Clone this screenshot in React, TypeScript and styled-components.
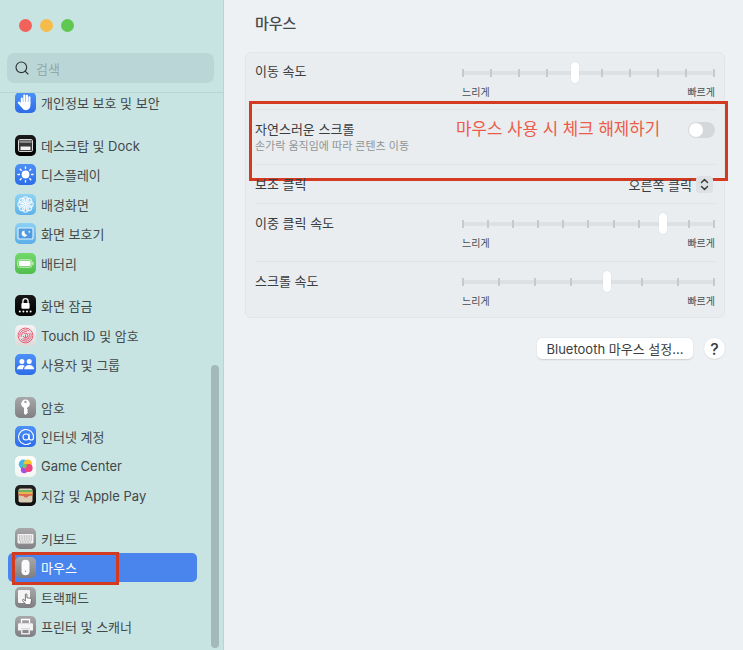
import React from 'react';
import styled, {createGlobalStyle} from 'styled-components';
import {AtSign, Search} from 'lucide-react';

const FONT = `Inter, "Noto Sans CJK KR", sans-serif`;

const GlobalStyle = createGlobalStyle`
  html, body {
    margin: 0;
    padding: 0;
    height: 100%;
    overflow: hidden;
    background: #EDF1F4;
  }
  body {
    font-family: ${FONT};
    -webkit-font-smoothing: antialiased;
  }
`;

const Window = styled.div`
  display: flex;
  width: 743px;
  height: 650px;
  overflow: hidden;
`;

/* sidebar */
const Sidebar = styled.aside`
  position: relative;
  flex: 0 0 223px;
  height: 650px;
  background: #C8E4E2;
  border-right: 1px solid #BAD4D3;
  display: flex;
  flex-direction: column;
`;
const Header = styled.div`
  flex: 0 0 93px;
  padding: 19px 9px 0 7px;
  box-sizing: border-box;
  border-bottom: 1px solid #B9D6D5;
`;
const Lights = styled.div`
  display: flex;
  gap: 8px;
  padding-left: 12px;
  margin-bottom: 21px;
`;
const Light = styled.span<{color: string}>`
  width: 13px;
  height: 13px;
  border-radius: 50%;
  background: ${props => props.color};
`;
const SearchBox = styled.div`
  height: 30px;
  border-radius: 7px;
  background: #BBD6D6;
  display: flex;
  align-items: center;
  gap: 6px;
  padding-left: 7px;
  color: #2F3436;
  font-size: 13px;
`;
const SearchHint = styled.span`
  color: #94A8A9;
`;
const ListClip = styled.div`
  flex: 1;
  overflow: hidden;
`;
const List = styled.div`
  margin-top: -5px;
  display: flex;
  flex-direction: column;
  gap: 13.4px;
`;
const Group = styled.div`
  display: flex;
  flex-direction: column;
`;
const Item = styled.div<{$active?: boolean}>`
  position: relative;
  height: 29.4px;
  margin: 0 26px 0 8px;
  padding-left: 7px;
  border-radius: 5px;
  display: flex;
  align-items: center;
  gap: 5px;
  font-size: 13px;
  color: ${props => props.$active ? '#FFFFFF' : '#43484A'};
  background: ${props => props.$active ? '#4A85EE' : 'transparent'};
`;
const Tile = styled.span<{$from: string; $to: string}>`
  flex: 0 0 21px;
  width: 21px;
  height: 21px;
  border-radius: 5px;
  background: linear-gradient(${props => props.$from}, ${props => props.$to});
  display: flex;
  align-items: center;
  justify-content: center;
  overflow: hidden;
  svg {
    display: block;
  }
`;
const Scrollbar = styled.div`
  position: absolute;
  left: 211px;
  top: 365px;
  width: 8px;
  height: 283px;
  border-radius: 4px;
  background: #A3B9BA;
`;
const Mark = styled.div`
  position: absolute;
  box-sizing: border-box;
  border: 3px solid #D33A20;
  pointer-events: none;
`;
const SidebarMark = styled(Mark)`
  left: 4px;
  top: -1px;
  width: 107px;
  height: 33px;
`;

/* main pane */
const Main = styled.main`
  flex: 1;
  padding: 0 18px 0 21px;
  color: #3A3D40;
`;
const Title = styled.h1`
  margin: 0;
  height: 52px;
  padding: 13px 0 0 10px;
  box-sizing: border-box;
  font-size: 15px;
  line-height: 22px;
  font-weight: 500;
  color: #46494C;
`;
const Card = styled.section`
  box-sizing: border-box;
  height: 266px;
  padding: 0 9px;
  background: #E9EDF0;
  border: 1px solid #E2E6E9;
  border-radius: 6px;
`;
const Row = styled.div<{$height: number}>`
  position: relative;
  box-sizing: border-box;
  height: ${props => props.$height}px;
  display: flex;
  justify-content: space-between;
  & + & {
    border-top: 1px solid #DFE3E6;
  }
`;
const Label = styled.div`
  font-size: 13px;
  line-height: 18px;
`;
const SliderLabel = styled(Label)`
  margin-top: 10px;
  ${Row}:first-child > & {
    margin-top: 9px;
  }
`;
const SliderBox = styled.div`
  width: 253px;
  padding-top: 9px;
`;
const Track = styled.div`
  position: relative;
  height: 21px;
  display: flex;
  align-items: center;
  justify-content: space-between;
  &::before {
    content: '';
    position: absolute;
    left: 0;
    right: 0;
    top: 8.5px;
    height: 4px;
    background: #DDE1E4;
  }
`;
const Tick = styled.span`
  position: relative;
  width: 2px;
  height: 8px;
  background: #C6CACD;
`;
const Thumb = styled.span`
  position: absolute;
  top: 0;
  width: 8px;
  height: 21px;
  margin-left: -4px;
  border-radius: 4px;
  background: #FFFFFF;
  box-shadow: 0 0 1px rgba(0, 0, 0, 0.2);
`;
const Captions = styled.div`
  display: flex;
  justify-content: space-between;
  margin-top: 3px;
  font-size: 10px;
  line-height: 12px;
  color: #4A4D50;
`;
const ToggleCopy = styled.div`
  padding-top: 10px;
`;
const Sub = styled.div`
  font-size: 11px;
  line-height: 16px;
  color: #909497;
`;
const Toggle = styled.span`
  align-self: flex-start;
  margin-top: 12px;
  width: 27px;
  height: 16px;
  border-radius: 8px;
  background: #D5D8DB;
  display: flex;
  align-items: center;
  padding-left: 1px;
  box-sizing: border-box;
`;
const Knob = styled.span`
  width: 14px;
  height: 14px;
  border-radius: 50%;
  background: #FFFFFF;
`;
const RowMark = styled(Mark)`
  left: -6px;
  right: -13px;
  top: -9px;
  bottom: -17px;
`;
const Annotation = styled.div`
  position: absolute;
  left: 201px;
  top: 7px;
  font-size: 16.8px;
  line-height: 24px;
  color: #EE5A48;
`;
const PlainRow = styled(Row)`
  align-items: center;
`;
const Picker = styled.div`
  display: flex;
  align-items: center;
  gap: 4px;
  padding-right: 2px;
  font-size: 13px;
`;
const Stepper = styled.span`
  width: 17px;
  height: 17px;
  border-radius: 4px;
  background: #DDE1E4;
  display: flex;
  align-items: center;
  justify-content: center;
`;
const Footer = styled.div`
  display: flex;
  justify-content: flex-end;
  align-items: center;
  gap: 11px;
  margin-top: 20px;
`;
const Button = styled.button`
  height: 21px;
  width: 156px;
  padding: 0;
  border: 0;
  border-radius: 5px;
  background: #FFFFFF;
  box-shadow: 0 0.5px 1.5px rgba(0, 0, 0, 0.14);
  font-family: ${FONT};
  font-size: 13px;
  color: #3A3D40;
`;
const Help = styled(Button)`
  width: 21px;
  border-radius: 50%;
  font-weight: 500;
  font-size: 16px;
`;

const Glyph = ({children}: {children: React.ReactNode}) => (
    <svg width="21" height="21" viewBox="0 0 21 21">{children}</svg>
);

const HandIcon = () => (
    <Tile $from="#4E93F7" $to="#2B6CE8">
        <Glyph>
            <g stroke="#FFF" strokeWidth="2.1" strokeLinecap="round" fill="none">
                <path d="M6.8 6.5V11M9.3 3.6V10.5M11.9 3.8V10.5M14.4 5.2V11" />
                <path d="M3.9 10.5L6.8 14" />
            </g>
            <path d="M6 10h9.4v3.6c0 2.7-1.9 4.6-4.4 4.6-2.1 0-3.2-.9-4.2-2.6L5 12.5z" fill="#FFF" />
        </Glyph>
    </Tile>
);
const DockIcon = () => (
    <Tile $from="#1B1B1B" $to="#000">
        <Glyph>
            <rect x="3.5" y="4.5" width="14" height="12" rx="1.2" fill="#3A3A3A" stroke="#D8D8D8" />
            <rect x="4.5" y="5.5" width="12" height="2.4" fill="#8E8E8E" />
            <rect x="5.5" y="11.5" width="10" height="3.5" rx=".6" fill="#F2F2F2" />
        </Glyph>
    </Tile>
);
const SunIcon = () => (
    <Tile $from="#4C90F6" $to="#2C6DE9">
        <Glyph>
            <circle cx="10.5" cy="10.5" r="3.9" fill="#FFF" />
            <g stroke="#FFF" strokeWidth="1.4" strokeLinecap="round">
                <path d="M10.5 3v1.4M10.5 16.6V18M3 10.5h1.4M16.6 10.5H18M5.2 5.2l1 1M14.8 14.8l1 1M15.8 5.2l-1 1M6.2 14.8l-1 1" />
            </g>
        </Glyph>
    </Tile>
);
const FlowerIcon = () => (
    <Tile $from="#8FD2F5" $to="#5DB2EA">
        <Glyph>
            <g fill="rgba(255,255,255,.28)" stroke="#FFF" strokeWidth=".9">
                <circle cx="10.5" cy="5.6" r="2.9" />
                <circle cx="10.5" cy="15.4" r="2.9" />
                <circle cx="5.6" cy="10.5" r="2.9" />
                <circle cx="15.4" cy="10.5" r="2.9" />
                <circle cx="7" cy="7" r="2.9" />
                <circle cx="14" cy="7" r="2.9" />
                <circle cx="7" cy="14" r="2.9" />
                <circle cx="14" cy="14" r="2.9" />
            </g>
            <circle cx="10.5" cy="10.5" r="1.4" fill="#FFF" />
        </Glyph>
    </Tile>
);
const SaverIcon = () => (
    <Tile $from="#8CD0F4" $to="#5BAEE8">
        <Glyph>
            <rect x="3" y="5" width="15" height="11" rx="1" fill="#4E9BE0" stroke="#E6F5FD" strokeWidth="1.1" />
            <path d="M9.6 7.6a3 3 0 1 0 2.6 4.4 3.4 3.4 0 0 1-2.6-4.4z" fill="#FFF" />
            <path d="M14.3 7.8v2M13.3 8.8h2" stroke="#FFF" strokeWidth=".7" />
        </Glyph>
    </Tile>
);
const BatteryIcon = () => (
    <Tile $from="#72D86B" $to="#51BE4C">
        <Glyph>
            <rect x="2.8" y="6.8" width="14" height="7.4" rx="1.8" fill="none" stroke="#CFF3CC" />
            <rect x="4" y="8" width="11.6" height="5" rx="1" fill="#FFF" />
            <rect x="17.4" y="9" width="1.2" height="3" rx=".5" fill="#CFF3CC" />
        </Glyph>
    </Tile>
);
const LockIcon = () => (
    <Tile $from="#181818" $to="#000">
        <Glyph>
            <path d="M7.9 8.4V6.3a2.6 2.6 0 0 1 5.2 0v2.1" fill="none" stroke="#FFF" strokeWidth="1.3" />
            <rect x="6.4" y="8" width="8.2" height="5.8" rx="1" fill="#FFF" />
            <g fill="#FFF">
                <circle cx="4.8" cy="16.6" r="1" />
                <circle cx="8.4" cy="16.6" r="1" />
                <circle cx="12" cy="16.6" r="1" />
                <circle cx="15.6" cy="16.6" r="1" />
            </g>
        </Glyph>
    </Tile>
);
const TouchIcon = () => (
    <Tile $from="#F5F2F2" $to="#DEDADA">
        <Glyph>
            <g fill="none" stroke="#E45E78" strokeWidth="1">
                <circle cx="10.5" cy="10.5" r="7.4" />
                <circle cx="10.5" cy="10.5" r="5.7" strokeDasharray="14 2" />
                <circle cx="10.5" cy="10.5" r="4" strokeDasharray="9 2" />
                <circle cx="10.5" cy="10.5" r="2.3" strokeDasharray="6 2" />
                <path d="M10.5 9.4v4" />
            </g>
        </Glyph>
    </Tile>
);
const UsersIcon = () => (
    <Tile $from="#4C90F6" $to="#2C6DE9">
        <Glyph>
            <g fill="#FFF">
                <circle cx="6.9" cy="7.6" r="2.5" />
                <circle cx="14.2" cy="7.6" r="2.5" />
                <path d="M2 15.2c0-2.7 2-4.3 4.9-4.3 1.2 0 2.2.3 3 .8-1.2.9-1.9 2.1-1.9 3.5z" />
                <path d="M9.2 15.2c0-2.7 2.1-4.3 5-4.3s5 1.6 5 4.3z" />
            </g>
        </Glyph>
    </Tile>
);
const KeyIcon = () => (
    <Tile $from="#A8A8AA" $to="#807F82">
        <Glyph>
            <circle cx="10.5" cy="6.8" r="4.3" fill="#FFF" />
            <circle cx="10.5" cy="4.9" r="1.2" fill="#9A9A9C" />
            <path d="M9 9h3v3l1.2 1-1.2 1.1 1.2 1.1-1.2 1.3-1.5 1.5L9 16.5z" fill="#FFF" />
        </Glyph>
    </Tile>
);
const AtIcon = () => (
    <Tile $from="#4C90F6" $to="#2C6DE9">
        <AtSign size={18} color="#FFFFFF" strokeWidth={1.5} />
    </Tile>
);
const GameIcon = () => (
    <Tile $from="#FFFFFF" $to="#F4F4F4">
        <Glyph>
            <circle cx="8.4" cy="8.2" r="4.6" fill="#3FB8F0" />
            <circle cx="12.8" cy="7.6" r="4.2" fill="#F7C52F" />
            <circle cx="9.2" cy="13.8" r="3.4" fill="#A64DE0" />
            <circle cx="13.6" cy="12" r="4" fill="#F0457E" />
            <circle cx="9.6" cy="10" r="2.2" fill="#6FC86A" />
        </Glyph>
    </Tile>
);
const WalletIcon = () => (
    <Tile $from="#232323" $to="#0E0E0E">
        <Glyph>
            <rect x="3.5" y="3.5" width="14" height="14" rx="2" fill="#D8CDB4" />
            <rect x="3.5" y="5" width="14" height="2" fill="#6DB36A" />
            <rect x="3.5" y="7" width="14" height="2" fill="#E9B44C" />
            <path d="M3.5 9h14v1.5l-4 .5c-.6 2-4.4 2-5 0l-5-.5z" fill="#DD6B4D" />
        </Glyph>
    </Tile>
);
const KeyboardIcon = () => (
    <Tile $from="#A8A8AA" $to="#828184">
        <Glyph>
            <rect x="2.5" y="6" width="16" height="9.5" rx="1" fill="#F1F1F1" />
            <path d="M4 8h13M4 10h13M4 12h13M5 14h11" stroke="#8E8E90" strokeWidth=".9" strokeDasharray="1 .7" />
        </Glyph>
    </Tile>
);
const MouseIcon = () => (
    <Tile $from="#A8A8AA" $to="#7F7E82">
        <Glyph>
            <rect x="6.5" y="2.8" width="8" height="15.4" rx="4" fill="#FAFAFA" />
            <circle cx="10.5" cy="14.2" r=".7" fill="#8E8E90" />
        </Glyph>
    </Tile>
);
const TrackpadIcon = () => (
    <Tile $from="#A8A8AA" $to="#7F7E82">
        <Glyph>
            <rect x="3" y="3" width="12" height="13" rx="1.2" fill="#F4F4F4" />
            <path d="M10.4 7.5c0-1 1.5-1 1.5 0v3.2l3.3.6c1 .2 1.5.9 1.3 1.9l-.6 3c-.2.9-.8 1.5-1.8 1.5h-2.2c-.7 0-1.2-.3-1.6-.8l-2.6-3.3c-.6-.8.4-1.7 1.1-1l1.6 1.4z" fill="#FFF" stroke="#55555A" strokeWidth=".8" />
        </Glyph>
    </Tile>
);
const PrinterIcon = () => (
    <Tile $from="#A8A8AA" $to="#7F7E82">
        <Glyph>
            <path d="M6.5 7V3.500h8V7" fill="none" stroke="#FFF" strokeWidth="1.3" />
            <path d="M3 8.5c0-.8.6-1.3 1.3-1.3h12.4c.7 0 1.3.5 1.3 1.3v6H15v-2H6v2H3z" fill="#F4F4F4" />
            <rect x="6.8" y="13.2" width="7.4" height="4.6" fill="none" stroke="#FFF" strokeWidth="1.2" />
        </Glyph>
    </Tile>
);

const GROUPS: {name: string; icon: JSX.Element; active?: boolean}[][] = [
    [{name: '개인정보 보호 및 보안', icon: <HandIcon />}],
    [
        {name: '데스크탑 및 Dock', icon: <DockIcon />},
        {name: '디스플레이', icon: <SunIcon />},
        {name: '배경화면', icon: <FlowerIcon />},
        {name: '화면 보호기', icon: <SaverIcon />},
        {name: '배터리', icon: <BatteryIcon />},
    ],
    [
        {name: '화면 잠금', icon: <LockIcon />},
        {name: 'Touch ID 및 암호', icon: <TouchIcon />},
        {name: '사용자 및 그룹', icon: <UsersIcon />},
    ],
    [
        {name: '암호', icon: <KeyIcon />},
        {name: '인터넷 계정', icon: <AtIcon />},
        {name: 'Game Center', icon: <GameIcon />},
        {name: '지갑 및 Apple Pay', icon: <WalletIcon />},
    ],
    [
        {name: '키보드', icon: <KeyboardIcon />},
        {name: '마우스', icon: <MouseIcon />, active: true},
        {name: '트랙패드', icon: <TrackpadIcon />},
        {name: '프린터 및 스캐너', icon: <PrinterIcon />},
    ],
];

const Slider = ({ticks, value}: {ticks: number; value: number}) => (
    <SliderBox>
        <Track>
            {Array.from({length: ticks}, (_, i) => <Tick key={i} />)}
            <Thumb style={{left: `${value / (ticks - 1) * 100}%`}} />
        </Track>
        <Captions>
            <span>느리게</span>
            <span>빠르게</span>
        </Captions>
    </SliderBox>
);

export default function App()
{
    return (
        <Window>
            <GlobalStyle />
            <Sidebar>
                <Header>
                    <Lights>
                        <Light color="#F0625A" />
                        <Light color="#F6BC4A" />
                        <Light color="#5FC853" />
                    </Lights>
                    <SearchBox>
                        <Search size={16} strokeWidth={1.7} />
                        <SearchHint>검색</SearchHint>
                    </SearchBox>
                </Header>
                <ListClip>
                    <List>
                        {GROUPS.map((group, index) => (
                            <Group key={index}>
                                {group.map(item => (
                                    <Item key={item.name} $active={item.active}>
                                        {item.icon}
                                        <span>{item.name}</span>
                                        {item.active && <SidebarMark />}
                                    </Item>
                                ))}
                            </Group>
                        ))}
                    </List>
                </ListClip>
                <Scrollbar />
            </Sidebar>
            <Main>
                <Title>마우스</Title>
                <Card>
                    <Row $height={56}>
                        <SliderLabel>이동 속도</SliderLabel>
                        <Slider ticks={10} value={4.03} />
                    </Row>
                    <Row $height={55}>
                        <ToggleCopy>
                            <Label>자연스러운 스크롤</Label>
                            <Sub>손가락 움직임에 따라 콘텐츠 이동</Sub>
                        </ToggleCopy>
                        <Toggle><Knob /></Toggle>
                        <Annotation>마우스 사용 시 체크 해제하기</Annotation>
                        <RowMark />
                    </Row>
                    <PlainRow $height={39}>
                        <Label>보조 클릭</Label>
                        <Picker>
                            오른쪽 클릭
                            <Stepper>
                                <svg width="9" height="13" viewBox="0 0 9 13" fill="none" stroke="#3A3D40" strokeWidth="1.5" strokeLinecap="round" strokeLinejoin="round">
                                    <path d="M1.5 4.5l3-3 3 3M1.5 8.5l3 3 3-3" />
                                </svg>
                            </Stepper>
                        </Picker>
                    </PlainRow>
                    <Row $height={58}>
                        <SliderLabel>이중 클릭 속도</SliderLabel>
                        <Slider ticks={11} value={7.95} />
                    </Row>
                    <Row $height={56}>
                        <SliderLabel>스크롤 속도</SliderLabel>
                        <Slider ticks={8} value={4} />
                    </Row>
                </Card>
                <Footer>
                    <Button>Bluetooth 마우스 설정...</Button>
                    <Help>?</Help>
                </Footer>
            </Main>
        </Window>
    );
}
